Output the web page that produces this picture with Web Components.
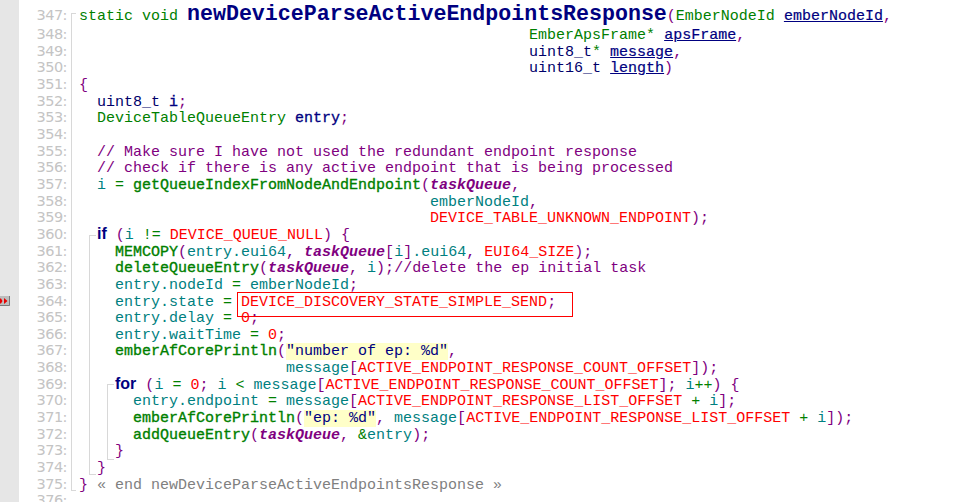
<!DOCTYPE html>
<html>
<head>
<meta charset="utf-8">
<style>
  html, body { margin: 0; padding: 0; background: #fff; height: 100%; overflow: hidden; }
</style>
</head>
<body>
<template id="code-line-tpl">
  <style>
    :host {
      display: grid;
      grid-template-columns: 48px 12px 1fr;
      height: 16.67px;
      font: 15px/16.67px "Liberation Mono", monospace;
      color: #000080;
      white-space: pre;
    }
    :host([tall]) { height: 22px; }
    .num {
      font: 14.5px/16.67px "DejaVu Sans", sans-serif;
      color: #c4c4c4;
      text-align: right;
      letter-spacing: -0.5px;
    }
    .src { padding-top: 2px; }
    :host([tall]) .num { line-height: 22px; }
    :host([tall]) .src { padding-top: 3px; line-height: 20px; }
    ::slotted(.k) { color: #008000; }
    ::slotted(.d) { color: #00006a; }
    ::slotted(.n) { color: #000080; -webkit-text-stroke: 0.3px #000080; }
    ::slotted(.c) { color: #800080; }
    ::slotted(.t) { color: #008080; }
    ::slotted(.o) { color: #008000; }
    ::slotted(.p) { color: #800080; }
    ::slotted(.r) { color: #ff0000; }
    ::slotted(.f) { color: #008000; -webkit-text-stroke: 0.35px #008000; }
    ::slotted(.v) { color: #800080; font-style: italic; font-weight: bold; }
    ::slotted(.s) { color: #000080; background: #ffffc8; }
    ::slotted(.g) { color: #808080; }
    ::slotted(.u) { color: #000080; text-decoration: underline; -webkit-text-stroke: 0.2px #000080; }
    ::slotted(.b) { color: #000080; font: bold 16px/0 "Liberation Sans", sans-serif; }
    ::slotted(.h) { color: #000080; font-size: 21.62px; line-height: 0; font-weight: bold; }
  </style>
  <span class="num"></span>
  <span></span>
  <span class="src"><slot></slot></span>
</template>

<template id="code-editor-tpl">
  <style>
    :host {
      display: flex;
      position: relative;
      width: 970px;
      height: 502px;
      overflow: hidden;
      background: #fff;
    }
    .rail { width: 19px; flex: none; background: #e6e6e6; }
    .lines { flex: 1; padding-top: 4px; }
    .guide { position: absolute; border-color: #d8d8d8; border-style: solid; border-width: 0; }
    .g1 { left: 71px; top: 13px; width: 4px; height: 476px; border-width: 1px 0 1px 1px; }
    .g2 { left: 89px; top: 235px; width: 6px; height: 238px; border-width: 1px 0 1px 1px; }
    .g3 { left: 107px; top: 384px; width: 6px; height: 74px; border-width: 1px 0 1px 1px; }
    .mark { position: absolute; left: 0; top: 296px; }
    .note {
      position: absolute;
      left: 237px;
      top: 292px;
      width: 334px;
      height: 23px;
      border: 1px solid #ff0000;
    }
  </style>
  <div class="rail"></div>
  <div class="lines"><slot></slot></div>
  <div class="guide g1"></div>
  <div class="guide g2"></div>
  <div class="guide g3"></div>
  <svg class="mark" width="10" height="10" viewBox="0 0 10 10">
    <rect x="0" y="0" width="10" height="10" fill="#bdbdbd"/>
    <path d="M0 9.5H9.5V0" fill="none" stroke="#7a7a7a"/>
    <path d="M0 2.5H1L2.5 5L1 7.5H0Z M4 2L7.5 5L4 8Z" fill="#e60000"/>
  </svg>
  <div class="note"></div>
</template>

<code-editor>
<code-line n="347" tall><span class="k">static void </span><span class="h">newDeviceParseActiveEndpointsResponse</span><span class="p">(</span><span class="k">EmberNodeId </span><span class="u">emberNodeId</span><span class="p">,</span></code-line>
<code-line n="348"><span>                                                  </span><span class="k">EmberApsFrame</span><span class="o">* </span><span class="u">apsFrame</span><span class="p">,</span></code-line>
<code-line n="349"><span>                                                  </span><span class="d">uint8_t</span><span class="o">* </span><span class="u">message</span><span class="p">,</span></code-line>
<code-line n="350"><span>                                                  </span><span class="d">uint16_t </span><span class="u">length</span><span class="p">)</span></code-line>
<code-line n="351"><span class="p">{</span></code-line>
<code-line n="352"><span>  </span><span class="d">uint8_t </span><span class="n">i</span><span class="p">;</span></code-line>
<code-line n="353"><span>  </span><span class="k">DeviceTableQueueEntry </span><span class="n">entry</span><span class="p">;</span></code-line>
<code-line n="354"></code-line>
<code-line n="355"><span class="c">  // Make sure I have not used the redundant endpoint response</span></code-line>
<code-line n="356"><span class="c">  // check if there is any active endpoint that is being processed</span></code-line>
<code-line n="357"><span>  </span><span class="t">i </span><span class="o">= </span><span class="f">getQueueIndexFromNodeAndEndpoint</span><span class="p">(</span><span class="v">taskQueue</span><span class="p">,</span></code-line>
<code-line n="358"><span>                                       </span><span class="t">emberNodeId</span><span class="p">,</span></code-line>
<code-line n="359"><span>                                       </span><span class="r">DEVICE_TABLE_UNKNOWN_ENDPOINT</span><span class="p">);</span></code-line>
<code-line n="360"><span>  </span><span class="b">if</span><span> </span><span class="p">(</span><span class="t">i </span><span class="o">!= </span><span class="r">DEVICE_QUEUE_NULL</span><span class="p">) {</span></code-line>
<code-line n="361"><span>    </span><span class="f">MEMCOPY</span><span class="p">(</span><span class="t">entry.eui64</span><span class="p">, </span><span class="v">taskQueue</span><span class="p">[</span><span class="t">i</span><span class="p">]</span><span class="t">.eui64</span><span class="p">, </span><span class="r">EUI64_SIZE</span><span class="p">);</span></code-line>
<code-line n="362"><span>    </span><span class="f">deleteQueueEntry</span><span class="p">(</span><span class="v">taskQueue</span><span class="p">, </span><span class="t">i</span><span class="p">);</span><span class="c">//delete the ep initial task</span></code-line>
<code-line n="363"><span>    </span><span class="t">entry.nodeId </span><span class="o">= </span><span class="t">emberNodeId</span><span class="p">;</span></code-line>
<code-line n="364"><span>    </span><span class="t">entry.state </span><span class="o">= </span><span class="r">DEVICE_DISCOVERY_STATE_SIMPLE_SEND</span><span class="p">;</span></code-line>
<code-line n="365"><span>    </span><span class="t">entry.delay </span><span class="o">= </span><span class="r">0</span><span class="p">;</span></code-line>
<code-line n="366"><span>    </span><span class="t">entry.waitTime </span><span class="o">= </span><span class="r">0</span><span class="p">;</span></code-line>
<code-line n="367"><span>    </span><span class="f">emberAfCorePrintln</span><span class="p">(</span><span class="s">"number of ep: %d"</span><span class="p">,</span></code-line>
<code-line n="368"><span>                       </span><span class="t">message</span><span class="p">[</span><span class="r">ACTIVE_ENDPOINT_RESPONSE_COUNT_OFFSET</span><span class="p">]);</span></code-line>
<code-line n="369"><span>    </span><span class="b">for</span><span> </span><span class="p">(</span><span class="t">i </span><span class="o">= </span><span class="r">0</span><span class="p">; </span><span class="t">i </span><span class="o">&lt; </span><span class="t">message</span><span class="p">[</span><span class="r">ACTIVE_ENDPOINT_RESPONSE_COUNT_OFFSET</span><span class="p">]; </span><span class="t">i</span><span class="o">++</span><span class="p">) {</span></code-line>
<code-line n="370"><span>      </span><span class="t">entry.endpoint </span><span class="o">= </span><span class="t">message</span><span class="p">[</span><span class="r">ACTIVE_ENDPOINT_RESPONSE_LIST_OFFSET </span><span class="o">+ </span><span class="t">i</span><span class="p">];</span></code-line>
<code-line n="371"><span>      </span><span class="f">emberAfCorePrintln</span><span class="p">(</span><span class="s">"ep: %d"</span><span class="p">, </span><span class="t">message</span><span class="p">[</span><span class="r">ACTIVE_ENDPOINT_RESPONSE_LIST_OFFSET </span><span class="o">+ </span><span class="t">i</span><span class="p">]);</span></code-line>
<code-line n="372"><span>      </span><span class="f">addQueueEntry</span><span class="p">(</span><span class="v">taskQueue</span><span class="p">, </span><span class="o">&amp;</span><span class="t">entry</span><span class="p">);</span></code-line>
<code-line n="373"><span>    </span><span class="p">}</span></code-line>
<code-line n="374"><span>  </span><span class="p">}</span></code-line>
<code-line n="375"><span class="p">} </span><span class="g">« end newDeviceParseActiveEndpointsResponse »</span></code-line>
<code-line n="376"></code-line>
</code-editor>

<script>
  class CodeEditor extends HTMLElement {
    constructor() {
      super();
      this.attachShadow({ mode: "open" });
      this.shadowRoot.appendChild(document.getElementById("code-editor-tpl").content.cloneNode(true));
    }
  }
  class CodeLine extends HTMLElement {
    constructor() {
      super();
      this.attachShadow({ mode: "open" });
      this.shadowRoot.appendChild(document.getElementById("code-line-tpl").content.cloneNode(true));
    }
    connectedCallback() {
      this.shadowRoot.querySelector(".num").textContent = this.getAttribute("n") + ":";
    }
  }
  customElements.define("code-editor", CodeEditor);
  customElements.define("code-line", CodeLine);
</script>
</body>
</html>
